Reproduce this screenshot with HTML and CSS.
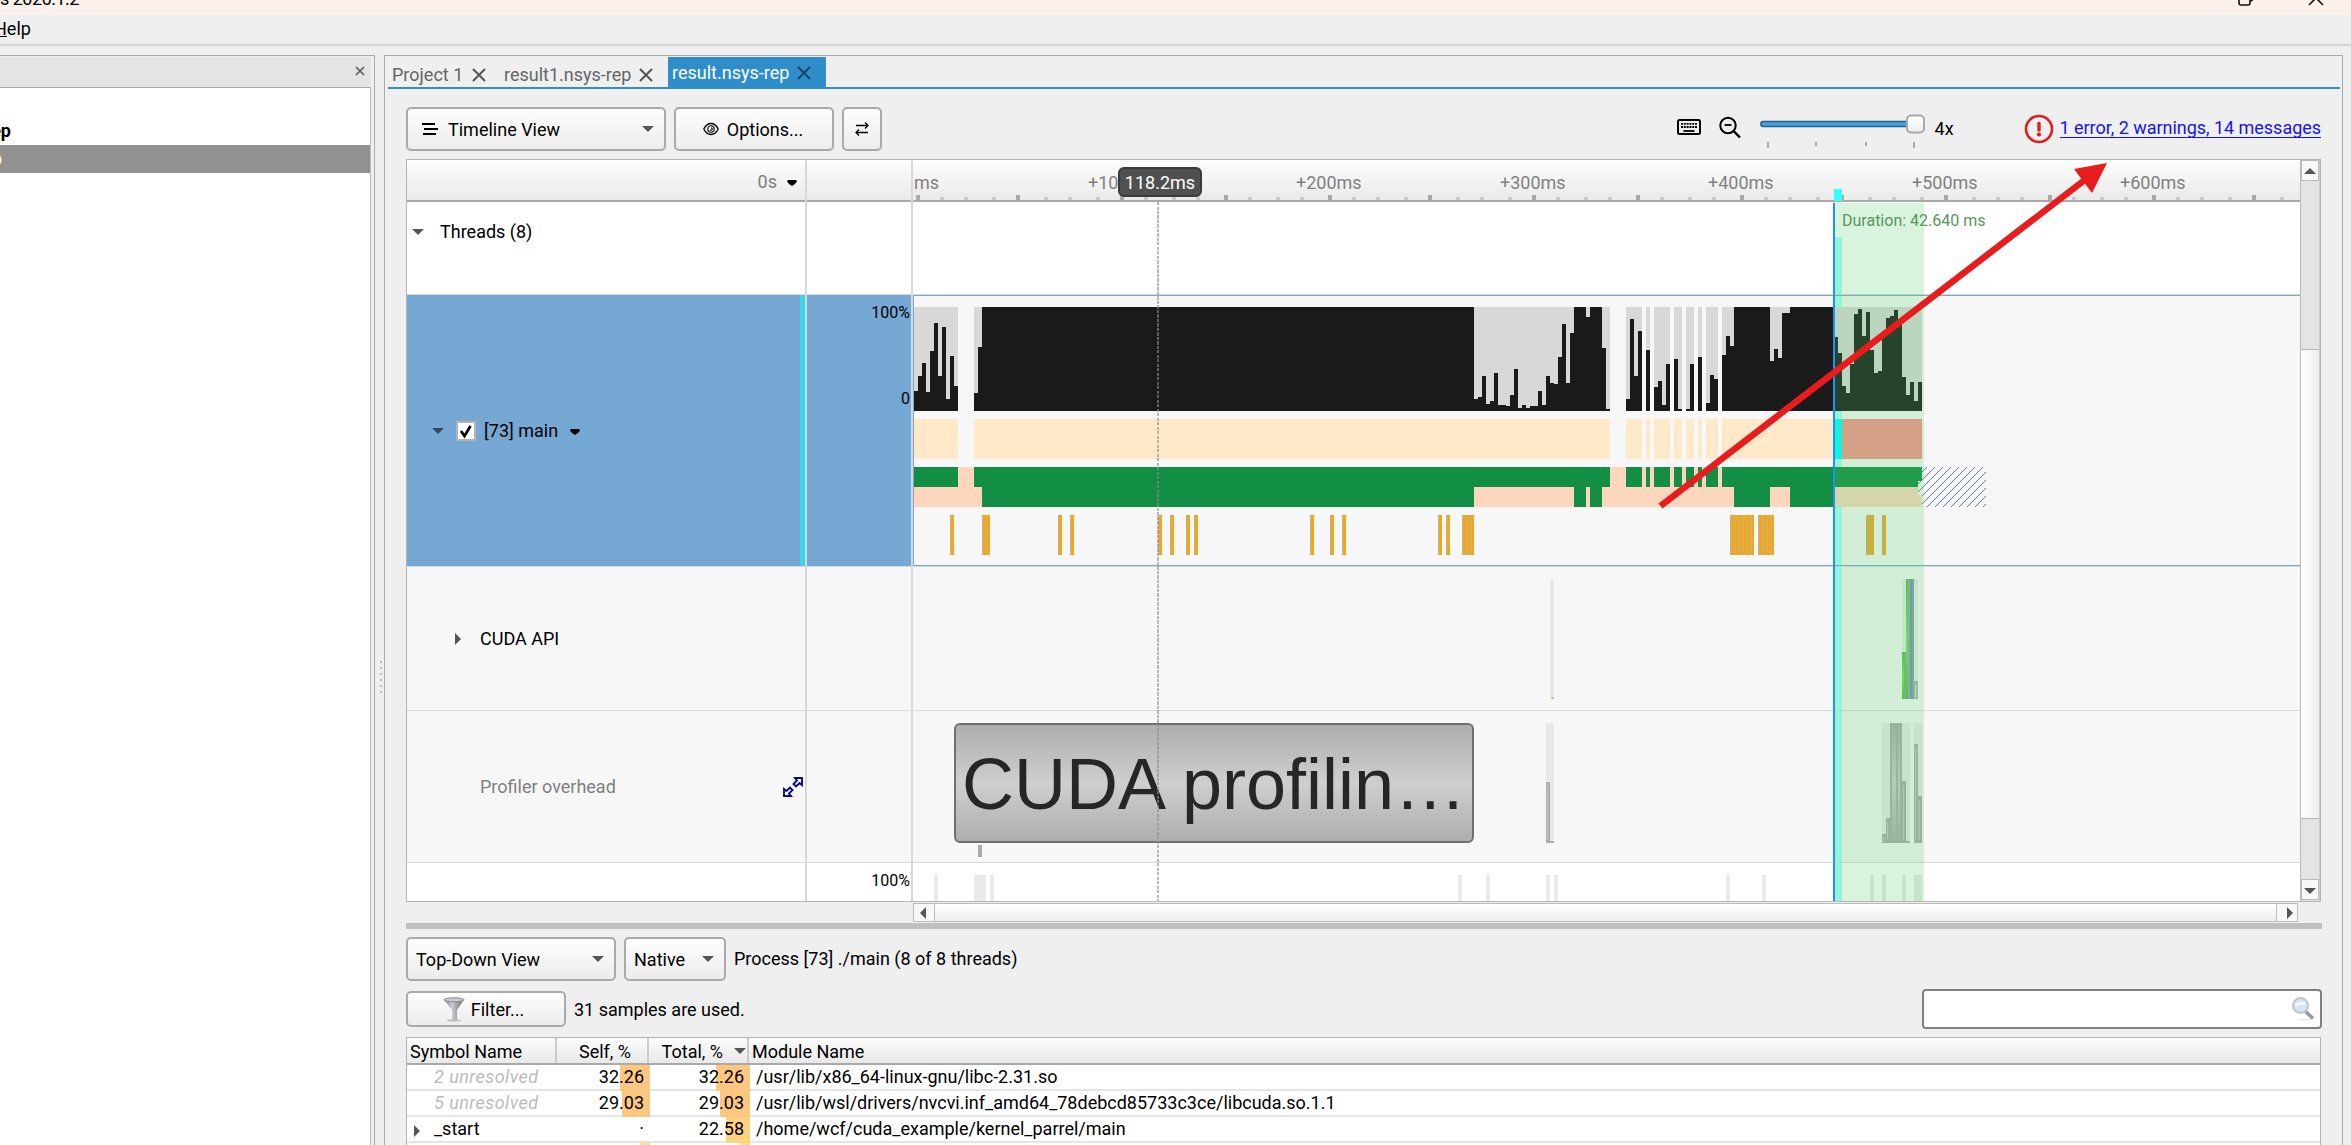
FILE: index.html
```html
<!DOCTYPE html>
<html lang="en">
<head>
    <meta charset="UTF-8">
    <meta name="viewport" content="width=device-width, initial-scale=1.0">
    <title>NVIDIA Nsight Systems 2026.1.2</title>
    <link rel="stylesheet" href="styles.css">
</head>
<body>
    <div class="titlebar">
      <span class="title">s 2026.1.2</span>
      <svg class="win-buttons" width="90" height="15" viewBox="0 0 90 15">
        <path d="M4 -4V3Q4 5 6 5H13Q15 5 15 3V-4M15 1Q18 1 18 -2" fill="none" stroke="#111" stroke-width="1.6"/>
        <path d="M74 5L88 -9M88 5L74 -9" stroke="#111" stroke-width="1.6"/>
      </svg>
    </div>
    <div class="menubar"><span><u>H</u>elp</span></div>

    <div class="main">
      <div class="explorer">
        <div class="explorer-head">
          <svg width="10" height="10" viewBox="0 0 10 10"><path d="M1 1L9 9M9 1L1 9" stroke="#555" stroke-width="1.5"/></svg>
        </div>
        <div class="explorer-body">
          <div class="item">result1.nsys-rep</div>
          <div class="item selected">result.nsys-rep</div>
        </div>
      </div>

      <div class="splitter-v"><i></i><i></i><i></i><i></i><i></i><i></i></div>

      <div class="document">
        <div class="tabs">
          <div class="tab tab-project"><span>Project 1</span><svg width="14" height="14" viewBox="0 0 14 14"><path d="M1 1L13 13M13 1L1 13"/></svg></div>
          <div class="tab tab-result"><span>result1.nsys-rep</span><svg width="14" height="14" viewBox="0 0 14 14"><path d="M1 1L13 13M13 1L1 13"/></svg></div>
          <div class="tab active"><span>result.nsys-rep</span><svg width="14" height="14" viewBox="0 0 14 14"><path d="M1 1L13 13M13 1L1 13"/></svg></div>
        </div>

        <div class="content">
          <div class="toolbar">
            <div class="btn view">
              <svg width="16" height="12" viewBox="0 0 16 12"><path d="M0 1H13M2 6H16M1 11H14" stroke="#000" stroke-width="2"/></svg>
              <span class="grow t-timeline">Timeline View</span>
              <span class="caret"></span>
            </div>
            <div class="btn options">
              <svg width="16" height="14" viewBox="0 0 16 14" fill="none" stroke="#000"><path d="M.8 7Q3.500 1.500 8 1.500T15.200 7Q12.500 12.500 8 12.500T.8 7Z" stroke-width="1.300"/><circle cx="8" cy="7" r="3.200" stroke-width="1.100"/><path d="M8 5.800Q9.500 6 9.200 7.500Q8.500 8.700 7 8" stroke-width="1.100"/></svg>
              <span class="t-options">Options...</span>
            </div>
            <div class="btn swap">
              <svg width="14" height="14" viewBox="0 0 14 14" fill="none" stroke="#000" stroke-width="1.300"><path d="M1 3.500H13M10 .5L13 3.500L10 6.500M13 10.500H1M4 7.500L1 10.500L4 13.500"/></svg>
            </div>
            <span class="grow"></span>
            <svg class="keyboard" width="24" height="16" viewBox="0 0 24 16"><rect x="1" y="1" width="22" height="14" rx="1.500" fill="none" stroke="#000" stroke-width="2"/><path d="M4 4.800H20M4 8H20" stroke="#000" stroke-width="1.800" stroke-dasharray="2 .8"/><path d="M6.500 12H17.500" stroke="#000" stroke-width="1.800"/></svg>
            <svg class="zoom-out" width="24" height="24" viewBox="0 0 24 24" fill="none" stroke="#000"><circle cx="10" cy="9.500" r="7.700" stroke-width="2"/><path d="M15.500 15L22 21.500" stroke-width="2.400"/><path d="M6.500 9H13.500" stroke-width="1.800"/></svg>
            <svg class="slider" width="168" height="36" viewBox="0 0 168 36">
              <defs><linearGradient id="knob" x1="0" y1="0" x2="0" y2="1"><stop offset="0" stop-color="#fff"/><stop offset="1" stop-color="#eee"/></linearGradient></defs>
              <rect x="1" y="7.500" width="160" height="5" rx="2" fill="#4aa0de" stroke="#20618f" stroke-width="1.600"/>
              <rect x="147" y="1.500" width="17" height="17" rx="4" fill="url(#knob)" stroke="#a9a9a9" stroke-width="2"/>
              <path d="M8 28V34M154 28V34" stroke="#aaa" stroke-width="2"/><path d="M56 28V32M106 28V32" stroke="#aaa" stroke-width="2"/>
            </svg>
            <span class="scale">4x</span>
            <svg class="error" width="30" height="30" viewBox="0 0 30 30"><circle cx="15" cy="15" r="13" fill="none" stroke="#e21b1b" stroke-width="2.600"/><path d="M15 9.500V16" stroke="#e21b1b" stroke-width="3.400" stroke-linecap="round"/><circle cx="15" cy="20.500" r="2.100" fill="#e21b1b"/></svg>
            <span class="messages">1 error, 2 warnings, 14 messages</span>
          </div>

          <div class="timeline">
            <div class="rows">
              <div class="row ruler">
                <div class="label"><span class="origin">0s</span><svg width="10" height="6" viewBox="0 0 10 6"><path d="M0 1.500Q0 0 1.500 0H8.500Q10 0 10 1.500Q9 3.500 5 6Q1 3.500 0 1.500Z"/></svg></div>
                <div class="value"></div>
                <svg class="lane" viewBox="913 160 1387 42">
                  <path class="tick-minor" d="M942 198.500h4M966 198.500h4M994 198.500h4M1046 198.500h4M1070 198.500h4M1098 198.500h4M1146 198.500h4M1174 198.500h4M1198 198.500h4M1250 198.500h4M1278 198.500h4M1302 198.500h4M1354 198.500h4M1378 198.500h4M1406 198.500h4M1458 198.500h4M1482 198.500h4M1510 198.500h4M1558 198.500h4M1586 198.500h4M1610 198.500h4M1662 198.500h4M1690 198.500h4M1714 198.500h4M1766 198.500h4M1790 198.500h4M1818 198.500h4M1870 198.500h4M1894 198.500h4M1922 198.500h4M1974 198.500h4M1998 198.500h4M2022 198.500h4M2074 198.500h4M2102 198.500h4M2126 198.500h4M2178 198.500h4M2202 198.500h4M2230 198.500h4M2282 198.500h4" transform="translate(-2 0)"/>
                  <path class="tick-major" d="M916 197.500h4M1016 197.500h4M1120 197.500h4M1224 197.500h4M1328 197.500h4M1428 197.500h4M1532 197.500h4M1636 197.500h4M1740 197.500h4M1840 197.500h4M1944 197.500h4M2048 197.500h4M2152 197.500h4M2252 197.500h4"/>
                  <rect x="1834" y="189" width="8" height="12" fill="#3ff"/>
                  <g class="ruler-text">
                    <text x="914" y="189">ms</text><text x="1088" y="189">+100ms</text><text x="1296" y="189">+200ms</text><text x="1500" y="189">+300ms</text><text x="1708" y="189">+400ms</text><text x="1912" y="189">+500ms</text><text x="2120" y="189">+600ms</text>
                  </g>
                </svg>
              </div>

              <div class="row threads">
                <div class="label"><span class="caret"></span><span class="name">Threads (8)</span></div>
                <div class="value"></div>
                <svg class="lane" viewBox="913 202 1387 92"><rect x="1834" y="237" width="8" height="57" fill="#a7fffa"/></svg>
              </div>

              <div class="row thread selected">
                <div class="label">
                  <span class="caret"></span>
                  <svg class="check" width="20" height="20" viewBox="0 0 20 20"><rect x="1" y="1" width="18" height="18" fill="#fff" stroke="#b4b4b4" stroke-width="2"/><path d="M5 10L8.500 15L14.500 5" fill="none" stroke="#000" stroke-width="2.600"/></svg>
                  <span class="name">[73] main</span>
                  <svg class="menu-mark" width="10" height="6" viewBox="0 0 10 6"><path d="M0 1.500Q0 0 1.500 0H8.500Q10 0 10 1.500Q9 3.500 5 6Q1 3.500 0 1.500Z"/></svg>
                </div>
                <div class="value"><span>100%</span><span class="zero">0</span></div>
                <svg class="lane" viewBox="913 295 1387 271" shape-rendering="crispEdges">
                  <defs>
                    <pattern id="samples" x="2" y="0" width="4" height="4" patternUnits="userSpaceOnUse"><rect width="2" height="4" fill="#ccae72"/><rect x="2" width="2" height="4" fill="#ffa500"/></pattern>
                    <pattern id="hatch" x="2" y="0" width="8" height="8" patternUnits="userSpaceOnUse"><path d="M-1 9L9 -1" stroke="#5266c9" stroke-width="0.900" shape-rendering="auto"/></pattern>
                  </defs>
                  <rect x="1834" y="295" width="8" height="271" fill="#a7fffa"/>
                  <!-- CPU utilization -->
                  <path fill="#d8d8d8" d="M914 307h44v104h-44zM974 307h636v104h-636zM1626 307h16v104h-16zM1646 307h4v104h-4zM1654 307h16v104h-16zM1674 307h8v104h-8zM1686 307h8v104h-8zM1698 307h4v104h-4zM1706 307h12v104h-12zM1722 307h200v104h-200z"/>
                  <path fill="#1a1a1a" d="M914 411V391h4V376h4V363h4V392h4V351h4V323h4V376h4V327h4V399h4V356h4V386h4V411z
                    M974 411V393h4V347h4V307H1474V399h4V397h4V376h4V404h4V401h4V373h4V405h8V406h4V395h4V369h4V408h4V405h4V408h4V406h8V391h4V405h4V376h4V383h4V384h4V357h4V324h4V383h4V333h4V307h12V317h4V307h12V348h4V409h4V411z
                    M1626 411V399h4V319h4V376h4V331h4V411zM1646 411V350h4V411zM1654 411V387h4V381h4V405h4V364h4V411z
                    M1674 411V359h4V409h4V411zM1686 411V409h4V364h4V411zM1698 411V357h4V411zM1706 411V403h4V375h4V379h4V411z
                    M1722 411V355h4V336h4V346h4V307h36V361h4V349h4V358h4V313h8V307h44V337h4V353h4V386h4V393h4V364h4V314h4V309h4V336h4V312h4V350h4V373h4V371h4V331h4V318h4V316h4V310h4V323h4V377h4V395h4V382h4V401h4V382h4V411z"/>
                  <path fill="#ffe9c8" d="M914 419h44v40h-44zM974 419h636v40h-636zM1626 419h16v40h-16zM1646 419h4v40h-4zM1654 419h16v40h-16zM1674 419h8v40h-8zM1686 419h8v40h-8zM1698 419h4v40h-4zM1706 419h12v40h-12zM1722 419h112v40h-112z"/>
                  <rect x="1834" y="419" width="8" height="40" fill="#0ff"/>
                  <rect x="1842" y="419" width="80" height="40" fill="#fa938f"/>
                  <!-- thread state -->
                  <rect x="914" y="467" width="1008" height="40" fill="#fdd6bd"/>
                  <path fill="#138f45" d="M914 467h44v20h-44zM974 467h636v20h-636zM1626 467h16v20h-16zM1646 467h4v20h-4zM1654 467h16v20h-16zM1674 467h8v20h-8zM1686 467h8v20h-8zM1698 467h4v20h-4zM1706 467h12v20h-12zM1722 467h200v20h-200zM982 487h492v20h-492zM1574 487h12v20h-12zM1590 487h12v20h-12zM1734 487h36v20h-36zM1790 487h44v20h-44z"/>
                  <rect x="1918" y="481" width="4" height="14" fill="#f7f7f7"/>
                  <path fill="url(#hatch)" d="M1922 467h64v40h-64zM1918 481h4v14h-4z"/>
                  <path fill="url(#samples)" d="M950 515h4v40h-4zM982 515h8v40h-8zM1058 515h4v40h-4zM1070 515h4v40h-4zM1158 515h4v40h-4zM1170 515h4v40h-4zM1186 515h4v40h-4zM1194 515h4v40h-4zM1310 515h4v40h-4zM1330 515h4v40h-4zM1342 515h4v40h-4zM1438 515h4v40h-4zM1446 515h4v40h-4zM1462 515h12v40h-12zM1730 515h24v40h-24zM1758 515h16v40h-16zM1866 515h8v40h-8zM1882 515h4v40h-4z"/>
                  <rect x="913.500" y="295.500" width="1388" height="270" fill="none" stroke="#75a9d4"/>
                </svg>
              </div>

              <div class="row api">
                <div class="label"><span class="caret right"></span><span class="name">CUDA API</span></div>
                <div class="value"></div>
                <svg class="lane" viewBox="913 567 1387 143" shape-rendering="crispEdges">
                  <defs>
                    <linearGradient id="grayBar" x1="0" y1="0" x2="0" y2="1"><stop offset="0" stop-color="#adadad"/><stop offset=".5" stop-color="#cfcfcf"/><stop offset="1" stop-color="#adadad"/></linearGradient>
                    <linearGradient id="greenBar" x1="0" y1="0" x2="0" y2="1"><stop offset="0" stop-color="#4fc044"/><stop offset=".5" stop-color="#66ee55"/><stop offset="1" stop-color="#4fc044"/></linearGradient>
                  </defs>
                  <rect x="1834" y="567" width="8" height="143" fill="#a7fffa"/>
                  <path fill="#e9e9e9" d="M1550 579h4v120h-4zM1902 579h16v120h-16z"/>
                  <rect x="1550" y="697" width="2" height="2" fill="#fbd58f"/><rect x="1552" y="697" width="2" height="2" fill="#c8b9a0"/>
                  <rect x="1902" y="652" width="2" height="47" fill="url(#greenBar)"/><rect x="1904" y="652" width="2" height="47" fill="#8aa68c"/>
                  <rect x="1906" y="579" width="2" height="120" fill="url(#greenBar)"/><rect x="1908" y="579" width="2" height="120" fill="#99ab9b"/>
                  <rect x="1910" y="579" width="2" height="120" fill="#6b94c4"/><rect x="1912" y="579" width="2" height="120" fill="#8f9b9f"/>
                  <rect x="1914" y="681" width="4" height="18" fill="#b0b0b0"/><rect x="1915" y="685" width="1" height="12" fill="#ddd"/>
                </svg>
              </div>

              <div class="row overhead">
                <div class="label">
                  <span class="name">Profiler overhead</span>
                  <svg class="expand" width="22" height="22" viewBox="0 0 22 22"><path d="M13 2H20V9L17.500 7L14 10.500L11.500 8L15 4.500ZM9 20H2V13L4.500 15L8 11.500L10.500 14L7 17.500Z" fill="#fff" stroke="#0a0a80" stroke-width="1.900"/></svg>
                </div>
                <div class="value"></div>
                <svg class="lane" viewBox="913 711 1387 151">
                  <rect x="1834" y="711" width="8" height="151" fill="#a7fffa"/>
                  <rect x="955" y="724" width="518" height="118" rx="5" fill="url(#grayBar)" stroke="#707070" stroke-width="2"/>
                  <text class="range-text" x="962" y="809">CUDA profilin…</text>
                  <rect x="978" y="845" width="4" height="12" fill="#ababab"/>
                  <path fill="#e9e9e9" d="M1546 723h8v120h-8zM1882 723h28v120h-28zM1914 723h8v120h-8z"/>
                  <path fill="#adadad" d="M1546 782h4v61h-4zM1550 841h4v2h-4zM1882 843V834h4V818h4V723h12V781h4V841h4V843zM1914 843V744h4V796h4V843z"/>
                  <path fill="url(#grayBar)" d="M1892 723h4v120h-4zM1898 723h2v120h-2z"/>
                  <path fill="#c8c8c8" d="M1547 785h1v55h-1zM1903 785h1v55h-1zM1887 822h1v18h-1zM1883 837h1v5h-1zM1915 748h1v92h-1zM1919 800h1v40h-1z"/>
                </svg>
              </div>

              <div class="row last">
                <div class="label"></div>
                <div class="value"><span>100%</span></div>
                <svg class="lane" viewBox="913 863 1387 38" shape-rendering="crispEdges">
                  <rect x="1834" y="863" width="8" height="38" fill="#a7fffa"/>
                  <path fill="#eaeaea" d="M934 875h4v26h-4zM974 875h12v26h-12zM990 875h4v26h-4zM1458 875h4v26h-4zM1486 875h4v26h-4zM1546 875h4v26h-4zM1554 875h4v26h-4zM1726 875h4v26h-4zM1762 875h4v26h-4zM1870 875h4v26h-4zM1882 875h4v26h-4zM1902 875h4v26h-4zM1914 875h8v26h-8z"/>
                </svg>
              </div>
            </div>

            <div class="scroll-v">
              <div class="scroll-btn"><span class="arrow up"></span></div>
              <div class="thumb"></div>
              <div class="scroll-btn bottom"><span class="arrow down"></span></div>
            </div>

            <div class="cursor-line"></div>
            <div class="cursor-time">118.2ms</div>
            <div class="selection"></div>
            <div class="duration">Duration: 42.640 ms</div>
          </div>

          <div class="scroll-h">
            <div class="scroll-btn"><span class="arrow left"></span></div>
            <div class="thumb"></div>
            <div class="scroll-btn end"><span class="arrow next"></span></div>
          </div>
          <div class="splitter-h"></div>

          <div class="panel-line first">
            <div class="btn mode"><span class="grow t-mode">Top-Down View</span><span class="caret"></span></div>
            <div class="btn native"><span class="grow t-native">Native</span><span class="caret"></span></div>
            <span class="process">Process [73] ./main (8 of 8 threads)</span>
          </div>
          <div class="panel-line second">
            <div class="btn filter">
              <svg width="22" height="25" viewBox="0 0 22 25">
                <defs><linearGradient id="metal"><stop offset="0" stop-color="#77777d"/><stop offset=".4" stop-color="#cdcdd5"/><stop offset="1" stop-color="#66666c"/></linearGradient></defs>
                <path d="M1 2.500L9 13V23H14V13L21 2.500Z" fill="url(#metal)"/><ellipse cx="11" cy="2.800" rx="10" ry="2" fill="#c9c9d2" stroke="#8a8a90"/><ellipse cx="11" cy="23.500" rx="7" ry="1" fill="#bbb"/>
              </svg>
              <span class="t-filter">Filter...</span>
            </div>
            <span class="grow samples">31 samples are used.</span>
            <div class="search">
              <svg width="26" height="26" viewBox="0 0 26 26"><ellipse cx="16" cy="23.500" rx="8" ry="1" fill="#eee"/><path d="M15 15L23 22.500" stroke="#999" stroke-width="3.500"/><circle cx="10.500" cy="9.500" r="7.500" fill="#d3e5f7" stroke="#c2c6cb" stroke-width="2"/><path d="M5.500 9Q10 6 15.500 8" stroke="#f2f8ff" stroke-width="3" fill="none"/></svg>
            </div>
          </div>

          <div class="table">
            <div class="tr th">
              <div class="c1">Symbol Name</div>
              <div class="c2">Self, %</div>
              <div class="c3">Total, %<span class="caret"></span></div>
              <div class="c4">Module Name</div>
            </div>
            <div class="tr">
              <div class="c1 unresolved">2 unresolved</div>
              <div class="c2"><i style="width: 30px"></i><span>32.26</span></div>
              <div class="c3"><i style="width: 34px"></i><span>32.26</span></div>
              <div class="c4">/usr/lib/x86_64-linux-gnu/libc-2.31.so</div>
            </div>
            <div class="tr">
              <div class="c1 unresolved">5 unresolved</div>
              <div class="c2"><i style="width: 28px"></i><span>29.03</span></div>
              <div class="c3"><i style="width: 30px"></i><span>29.03</span></div>
              <div class="c4">/usr/lib/wsl/drivers/nvcvi.inf_amd64_78debcd85733c3ce/libcuda.so.1.1</div>
            </div>
            <div class="tr">
              <div class="c1"><span class="caret right"></span>_start</div>
              <div class="c2"><span>·</span></div>
              <div class="c3"><i class="mid" style="width: 24px"></i><span>22.58</span></div>
              <div class="c4">/home/wcf/cuda_example/kernel_parrel/main</div>
            </div>
            <div class="tr">
              <div class="c1"></div>
              <div class="c2"><i class="low" style="width: 10px"></i></div>
              <div class="c3"><i class="low" style="width: 10px"></i></div>
              <div class="c4"></div>
            </div>
          </div>
        </div>
      </div>
    </div>

    <svg class="annotation" width="460" height="360" viewBox="1650 155 460 360">
      <path d="M1660.500 506L2086 179" stroke="#e81c1c" stroke-width="6.500"/>
      <path d="M2107 163L2074 169L2092 193Z" fill="#e81c1c"/>
    </svg>
</body>
</html>
```
FILE: styles.css
```css
* {
    box-sizing: border-box;
}
body {
    margin: 0;
    height: 1145px;
    display: flex;
    flex-direction: column;
    overflow: hidden;
    background-color: #efefef;
    font-family: Roboto, "Liberation Sans", sans-serif;
    font-size: 18px;
    color: #000;
    white-space: nowrap;
}
svg {
    display: block;
    flex: none;
}
.grow {
    flex: 1;
}

/* Window */
.titlebar {
    height: 15px;
    flex: none;
    display: flex;
    justify-content: space-between;
    background-color: #fbf1eb;
    overflow: hidden;
}
.titlebar .title {
    line-height: 22px;
    margin-top: -12px;
    letter-spacing: -0.5px;
}
.titlebar .win-buttons {
    margin-right: 26px;
}
.menubar {
    height: 31px;
    flex: none;
    border-bottom: 2px solid #d5d5d5;
    line-height: 28px;
}
.menubar span {
    margin-left: -6px;
}
.main {
    flex: 1;
    min-height: 0;
    display: flex;
    padding-top: 9px;
}

/* Project explorer */
.explorer {
    width: 375px;
    border-top: 1px solid #a9a9a9;
    border-right: 1px solid #a9a9a9;
    padding: 1px 3px 0 0;
}
.explorer-head {
    height: 31px;
    display: flex;
    align-items: center;
    justify-content: flex-end;
    padding: 0 6px 3px 0;
    background-color: #e4e4e4;
    border-bottom: 1px solid #aaa;
}
.explorer-body {
    height: 100%;
    padding-top: 29px;
    background-color: #fff;
    border-right: 1px solid #bbb;
}
.explorer-body .item {
    height: 28px;
    line-height: 28px;
    display: flex;
    justify-content: flex-end;
    width: 11px;
    font-weight: bold;
}
.explorer-body .item.selected {
    width: 370px;
    background-color: #919191;
    color: #fff;
    font-weight: normal;
    padding-right: 368px;
}
.splitter-v {
    width: 9px;
    display: flex;
    flex-direction: column;
    align-items: flex-end;
    gap: 4px;
    padding: 606px 2px 0 0;
}
.splitter-v i {
    width: 2px;
    height: 2px;
    background-color: #bbb;
}

/* Document area */
.document {
    width: 1959px;
    border: 1px solid #a9a9a9;
    border-bottom: 0;
    padding: 1px 2px 0 3px;
}
.tabs {
    height: 32px;
    display: flex;
    border-bottom: 2px solid #2f8dc9;
}
.tab {
    display: flex;
    justify-content: space-between;
    align-items: center;
    color: #666;
    padding-top: 5px;
}
.tab svg path {
    stroke: #555;
    stroke-width: 2;
}
.tab.tab-project {
    width: 94px;
    margin-left: 4px;
}
.tab.tab-result {
    width: 149px;
    margin: 0 15px 0 18px;
}
.tab.active {
    width: 158px;
    padding: 1px 15px 0 4px;
    background-color: #2f8dc9;
    color: #fff;
}
.tab.active svg path {
    stroke: #1c4664;
}
.content {
    padding: 18px 18px 0;
    display: flex;
    flex-direction: column;
}
.toolbar {
    display: flex;
    height: 44px;
    margin-bottom: 8px;
}
.btn {
    display: flex;
    align-items: center;
    height: 44px;
    border: 2px solid #aaa;
    border-radius: 5px;
    background: linear-gradient(#fefefe, #ececec);
    flex: none;
}
.btn.view {
    width: 260px;
    padding: 0 10px 0 14px;
    gap: 10px;
    margin-right: 8px;
}
.btn.options {
    width: 160px;
    justify-content: center;
    gap: 8px;
    margin-right: 8px;
    padding-right: 2px;
}
.btn.swap {
    width: 40px;
    justify-content: center;
}
.caret {
    flex: none;
    border: 6px solid transparent;
    border-top: 6px solid #555;
    border-bottom: 0;
}
.caret.right {
    border: 6px solid transparent;
    border-left: 6px solid #555;
    border-right: 0;
}
.toolbar .keyboard {
    margin: 12px 17px 0 0;
}
.toolbar .zoom-out {
    margin: 9px 18px 0 0;
}
.toolbar .slider {
    margin: 7px 7px 0 0;
}
.toolbar .scale {
    width: 89px;
    line-height: 43px;
}
.toolbar .error {
    margin: 7px 6px 0 0;
}
.toolbar .messages {
    height: 31px;
    line-height: 41px;
    margin-right: 1px;
    color: #1414f5;
    letter-spacing: -0.03px;
    border-bottom: 1px solid #1414f5;
}

/* Timeline */
.timeline {
    position: relative;
    display: flex;
    width: 1915px;
    height: 743px;
    border: 1px solid #b4b4b4;
}
.rows {
    width: 1893px;
}
.row {
    display: flex;
    border-bottom: 1px solid #d8d8d8;
}
.row .label {
    width: 400px;
    flex: none;
    display: flex;
    align-items: center;
    border-right: 2px solid #d8d8d8;
}
.row .value {
    width: 106px;
    flex: none;
    display: flex;
    flex-direction: column;
    align-items: flex-end;
    border-right: 2px solid #d8d8d8;
    padding-right: 1px;
    font-size: 16px;
    line-height: 20px;
}
.row .lane {
    width: 1387px;
}
.row.ruler {
    height: 42px;
    border-bottom: 0;
    background: linear-gradient(#fdfdfd, #eaeaea 40px, #a9a9a9 40px);
}
.row.ruler .label {
    justify-content: flex-end;
    gap: 10px;
    padding: 0 8px 0 0;
    color: #808080;
}
.row.ruler .label svg {
    margin-top: 4px;
}
.tick-minor {
    stroke: #cbcbcb;
    stroke-width: 3;
}
.tick-major {
    stroke: #a9a9a9;
    stroke-width: 5;
}
.ruler-text {
    font-size: 18px;
    fill: #808080;
}
.row.threads {
    height: 93px;
    background-color: #fff;
}
.row.threads .label {
    align-items: flex-start;
    padding: 27px 0 0 5px;
}
.row.threads .name {
    margin: -8px 0 0 16px;
}
.row.thread {
    height: 272px;
    background-color: #f7f7f7;
}
.row.thread .label {
    background-color: #75a9d4;
    border-right-color: #d8d8d8;
    box-shadow: inset -5px 0 #3ad6ec;
    padding-left: 25px;
}
.row.thread .caret {
    border-top-color: #34495b;
}
.row.thread .check {
    margin: 0 8px 0 12px;
}
.row.thread .name {
    margin-right: 12px;
}
.row.thread .menu-mark {
    margin-top: 3px;
}
.row.thread .value {
    background-color: #75a9d4;
    padding-top: 8px;
}
.row.thread .zero {
    margin-top: 66px;
}
.row.api {
    height: 144px;
    background-color: #f7f7f7;
}
.row.api .label {
    padding-left: 48px;
}
.row.api .name {
    margin-left: 19px;
}
.row.overhead {
    height: 152px;
    background-color: #f7f7f7;
}
.row.overhead .label {
    justify-content: space-between;
    padding: 0 1px 0 73px;
    color: #808080;
}
.range-text {
    font-family: "Liberation Sans", Arial, sans-serif;
    font-size: 72px;
    fill: #262626;
}
.row.last {
    height: 38px;
    border-bottom: 0;
    background-color: #fff;
}
.row.last .value {
    padding-top: 8px;
}
.cursor-line {
    position: absolute;
    left: 750px;
    top: 42px;
    height: 699px;
    width: 2px;
    background: repeating-linear-gradient(rgba(140, 140, 140, 0.6) 0 3px, transparent 3px 4.5px);
}
.cursor-time {
    position: absolute;
    left: 711px;
    top: 7px;
    width: 84px;
    height: 30px;
    border: 2px solid #3b3b3b;
    border-radius: 6px;
    background-color: #505050;
    color: #fff;
    line-height: 27px;
    text-align: center;
}
.selection {
    position: absolute;
    left: 1426px;
    top: 43px;
    width: 91px;
    height: 698px;
    border-left: 2px solid #1e90ff;
    background-color: rgba(83, 207, 101, 0.227);
}
.duration {
    position: absolute;
    left: 1435px;
    top: 50px;
    font-size: 16px;
    line-height: 22px;
    color: #5a965f;
}

/* Scrollbars */
.scroll-v {
    width: 20px;
    display: flex;
    flex-direction: column;
    background-color: #e4e4e4;
    border-left: 1px solid #bbb;
    border-right: 1px solid #ccc;
}
.scroll-v .thumb {
    height: 470px;
    margin: 168px 0 60px;
    border: 1px solid #b4b4b4;
    border-width: 1px 0;
    background: linear-gradient(to right, #fff, #eee);
}
.scroll-btn {
    flex: none;
    width: 18px;
    height: 21px;
    display: flex;
    align-items: center;
    justify-content: center;
    background-color: #f8f8f8;
    border: 1px solid #bbb;
}
.arrow {
    border: 6px solid transparent;
}
.arrow.up {
    border-bottom-color: #555;
    margin-bottom: 6px;
}
.arrow.down {
    border-top-color: #555;
    margin-top: 8px;
}
.arrow.left {
    border-right-color: #555;
    margin-right: 9px;
}
.arrow.next {
    border-left-color: #555;
    margin-left: 11px;
}
.scroll-h {
    display: flex;
    width: 1385px;
    height: 19px;
    margin: 1px 0 1px 507px;
}
.scroll-h .scroll-btn {
    width: 22px;
    height: 19px;
}
.scroll-h .thumb {
    flex: 1;
    border: 1px solid #bbb;
    border-width: 1px 0;
    background: linear-gradient(#fff, #efefef);
}
.splitter-h {
    width: 1916px;
    height: 6px;
    background-color: #bfbfbf;
}

/* Function table panel */
.panel-line {
    display: flex;
    width: 1916px;
}
.panel-line.first {
    margin-top: 8px;
    line-height: 43px;
}
.btn.mode {
    width: 210px;
    padding: 0 10px 0 8px;
    margin-right: 8px;
}
.btn.native {
    width: 102px;
    padding: 0 10px 0 8px;
    margin-right: 8px;
}
.panel-line.second {
    height: 40px;
    margin-top: 8px;
    align-items: center;
}
.btn.filter {
    width: 160px;
    height: 36px;
    justify-content: center;
    gap: 6px;
    padding-right: 5px;
    margin-right: 8px;
}
.search {
    width: 400px;
    height: 40px;
    display: flex;
    align-items: center;
    justify-content: flex-end;
    padding-right: 4px;
    border: 2px solid #808080;
    border-radius: 4px;
    background-color: #fff;
}
.table {
    width: 1915px;
    margin-top: 8px;
    border: 1px solid #b4b4b4;
    background-color: #fff;
}
.tr {
    display: flex;
    height: 26px;
    line-height: 23px;
    border-bottom: 2px solid #e5e5e5;
}
.tr > div {
    position: relative;
}
.tr .c1 {
    width: 150px;
    padding-left: 27px;
}
.tr .c2 {
    width: 93px;
}
.tr .c3 {
    width: 100px;
}
.tr .c2, .tr .c3 {
    padding-right: 6px;
    text-align: right;
}
.tr .c4 {
    flex: 1;
    padding-left: 6px;
}
.tr i {
    position: absolute;
    right: 0;
    top: 0;
    height: 26px;
    background-color: #fec77f;
}
.tr i.mid {
    background-color: #fed17e;
}
.tr i.low {
    background-color: #fee08a;
}
.tr span {
    position: relative;
}
.tr .unresolved {
    color: #bbb;
    font-style: italic;
    letter-spacing: 0.45px;
}
.tr .c1 .caret {
    display: inline-block;
    margin: 0 14px -2px -20px;
}
.tr.th {
    height: 27px;
    line-height: 27px;
    background: linear-gradient(#fcfcfc, #e9e9e9);
    border-bottom: 2px solid #a9a9a9;
}
.tr.th > div {
    border-right: 2px solid #ccc;
}
.tr.th .c1 {
    padding-left: 3px;
}
.tr.th .c2 {
    width: 92px;
    padding-right: 16px;
}
.tr.th .c3 {
    padding-right: 24px;
}
.tr.th .c3 .caret {
    position: absolute;
    right: 1px;
    top: 10px;
}
.tr.th .c4 {
    padding-left: 3px;
    border-right: 0;
}

/* Arrow drawn over the window */
.annotation {
    position: absolute;
    left: 1650px;
    top: 155px;
}
```
